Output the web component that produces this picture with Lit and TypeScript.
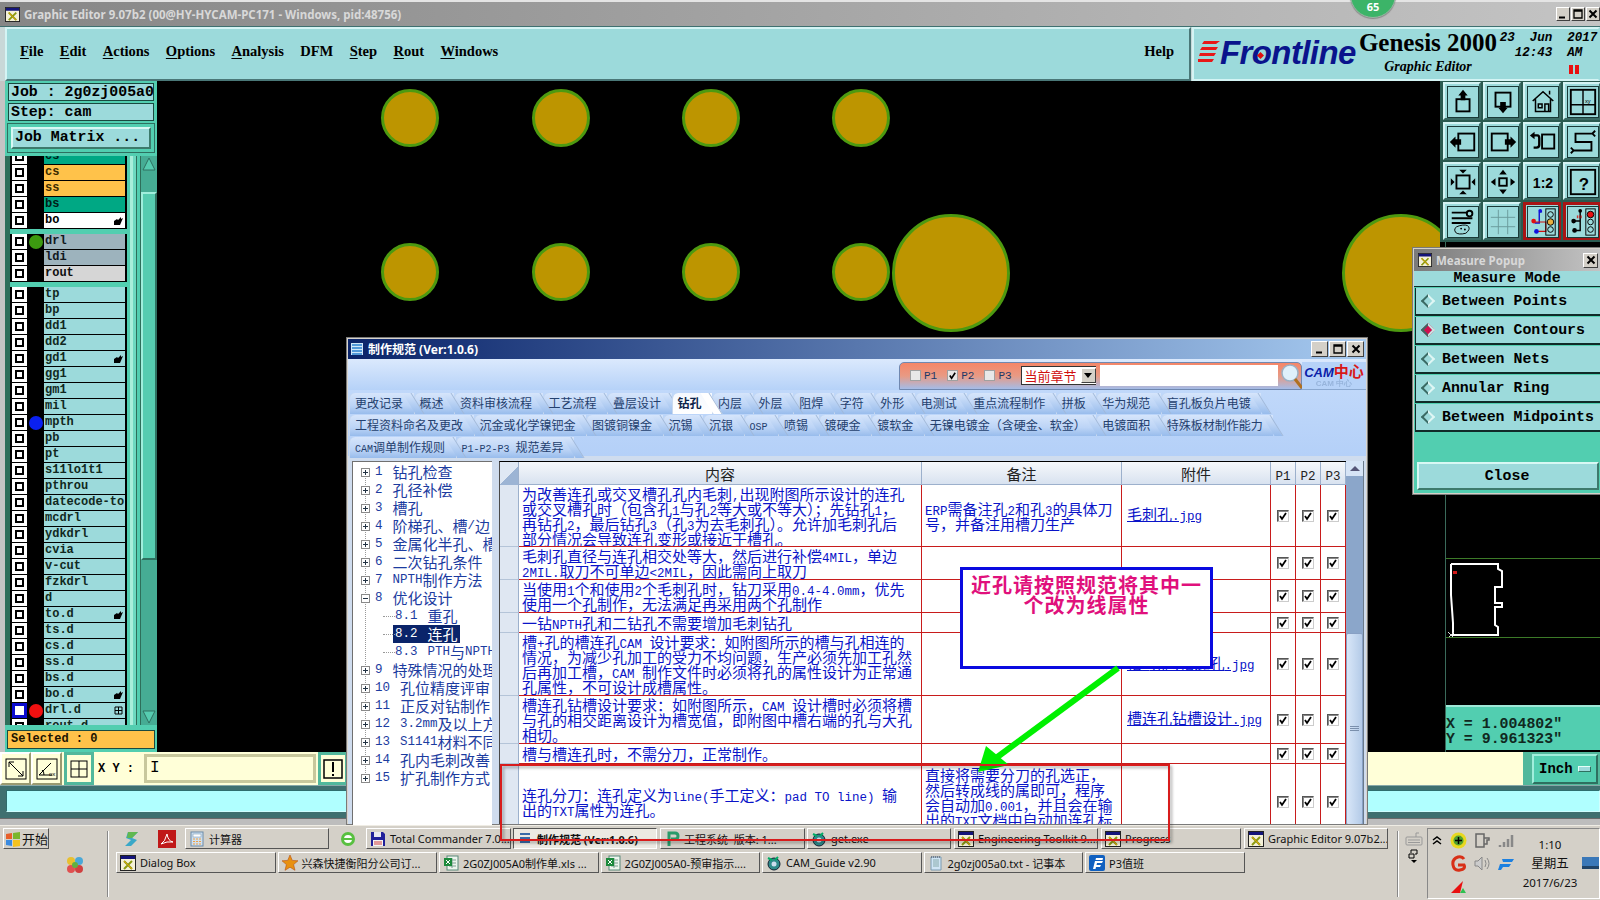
import { LitElement, html, css, svg } from "lit";
import { customElement } from "lit/decorators.js";

// half-width runs of the SimSun-like text
const mix = (text: string) =>
  text.split(/([\x21-\x7e ]+)/).map((part, i) => (i % 2 ? html`<span class="lat">${part}</span>` : part));

const appIcon = html`<svg class="ico" viewBox="0 0 16 16"><rect x=".5" y=".5" width="15" height="15" fill="#f4f0d8" stroke="#222"/><rect x="1" y="1" width="14" height="3" fill="#14147a"/><path d="M4 6l8 8M12 6l-8 8" stroke="#8a9a10" stroke-width="2"/><path d="M4 6l8 8" stroke="#e0a000" stroke-width="1"/></svg>`;
const xlsIcon = html`<svg class="ico" viewBox="0 0 16 16"><rect x="4" y="1" width="11" height="14" fill="#eef5ee" stroke="#5a8a7a"/><path d="M6 5h7M6 8h7M6 11h7M9 3v10" stroke="#7aa090"/><rect x="1" y="3" width="8" height="8" fill="#1c8a3c"/><path d="M3 5l4 4M7 5l-4 4" stroke="#fff"/></svg>`;
const noteIcon = html`<svg class="ico" viewBox="0 0 16 16"><path d="M3 2h10v13H3z" fill="#cfe4f4" stroke="#7a9ab0"/><path d="M5 5h6M5 7h6M5 9h6M5 11h6" stroke="#8aa"/><path d="M3 2h10" stroke="#445" stroke-dasharray="1 1"/></svg>`;
const gearIcon = html`<svg class="ico" viewBox="0 0 16 16"><circle cx="8" cy="9" r="6" fill="#2e8a8a" stroke="#123"/><circle cx="8" cy="9" r="2.5" fill="#cde"/><path d="M2 3l4 2M12 2l-3 3" stroke="#0a6" stroke-width="2"/></svg>`;
const calcIcon = html`<svg class="ico" viewBox="0 0 16 16"><rect x="2" y="1" width="12" height="14" fill="#cfe0f0" stroke="#6a8aa8"/><rect x="4" y="3" width="8" height="3" fill="#fff" stroke="#6a8aa8" stroke-width=".5"/><path d="M4 8h2M7 8h2M10 8h2M4 10.5h2M7 10.5h2M10 10.5h2M4 13h2M7 13h2M10 13h2" stroke="#f0a040"/></svg>`;
const diskIcon = html`<svg class="ico" viewBox="0 0 16 16"><path d="M1 1h12l2 2v12H1z" fill="#20209a"/><rect x="4" y="1" width="7" height="5" fill="#e8e8f0"/><rect x="3" y="9" width="10" height="6" fill="#f4f4f4"/><path d="M4 11h8M4 13h8" stroke="#d04040"/></svg>`;
const docIcon = html`<svg class="ico" viewBox="0 0 16 16"><path d="M3 3h10M3 7h10M3 11h10" stroke="#3a6aa8" stroke-width="2"/></svg>`;
const pIcon = html`<svg class="ico" viewBox="0 0 16 16"><path d="M5 15V2h6q3 0 3 3t-3 3H7" fill="none" stroke="#2a9a6a" stroke-width="3"/></svg>`;
const starIcon = html`<svg class="ico" viewBox="0 0 16 16"><path d="M8 0l2.3 5.4 5.7.4-4.4 3.8 1.4 5.7L8 12.2l-5 3.1 1.4-5.7L0 5.8l5.700-.4z" fill="#e89010" stroke="#b85010" stroke-width=".6"/></svg>`;
const fIcon = html`<svg class="ico" viewBox="0 0 16 16"><rect width="16" height="16" rx="2" fill="#1060c0"/><path d="M4 14l2-8h8l-1 2H8l-.5 2H12l-1 2H7l-.5 2zM7 3h7l-.5 2H6.5z" fill="#fff"/></svg>`;

const minGlyph = html`<svg viewBox="0 0 10 10"><path d="M1 8.5h6" stroke="#000" stroke-width="2"/></svg>`;
const maxGlyph = html`<svg viewBox="0 0 10 10"><path d="M1 1h8v8H1zM1 2h8" fill="none" stroke="#000" stroke-width="1.3"/></svg>`;
const closeGlyph = html`<svg viewBox="0 0 10 10"><path d="M1.5 1.5l7 7M8.5 1.5l-7 7" stroke="#000" stroke-width="2"/></svg>`;

const toolIcons = [
  svg`<rect x="9" y="13" width="14" height="13" fill="none" stroke="#000" stroke-width="2"/><path d="M16 3l5 6h-2.5v5h-5V9H11z"/>`,
  svg`<rect x="8" y="6" width="16" height="15" fill="none" stroke="#000" stroke-width="2"/><path d="M16 28l5-6h-2v-6h-6v6h-2z"/>`,
  svg`<path d="M5 15L16 5l11 10M8 13v13h16V13M11 18h4v4h-4zM18 18h4v8h-4zM23 8v-4" fill="none" stroke="#000" stroke-width="1.6"/>`,
  svg`<rect x="3" y="3" width="26" height="26" fill="none" stroke="#000" stroke-width="2"/><path d="M3 19h26M16 3v26" stroke="#000" stroke-width="1.5"/><text x="18" y="17" font-size="6" font-family="Liberation Sans">xy</text>`,
  svg`<rect x="11" y="7" width="17" height="18" fill="none" stroke="#000" stroke-width="2"/><path d="M2 16l6-6v3h6v6H8v3z"/>`,
  svg`<rect x="4" y="7" width="17" height="18" fill="none" stroke="#000" stroke-width="2"/><path d="M30 16l-6-6v3h-6v6h6v3z"/>`,
  svg`<rect x="15" y="8" width="13" height="15" fill="none" stroke="#000" stroke-width="2"/><path d="M5 9h5q2 0 2 3v7q0 3-3 3H6" fill="none" stroke="#000" stroke-width="2.5"/><path d="M2 9l5-4v8z"/>`,
  svg`<path d="M27 7H8v9h17v9H6M29 4l-3 3 3 3M3 22l3 3-3 3" fill="none" stroke="#000" stroke-width="2"/>`,
  svg`<rect x="9" y="9" width="14" height="14" fill="none" stroke="#000" stroke-width="2"/><path d="M16 7l-4-4h8zM16 25l-4 4h8zM7 16l-4-4v8zM25 16l4-4v8z"/>`,
  svg`<rect x="12" y="12" width="8" height="8" fill="none" stroke="#000" stroke-width="2"/><path d="M16 3l-4 5h8zM16 29l-4-5h8zM3 16l5-4v8zM29 16l-5-4v8z"/>`,
  svg`<text x="16" y="22" text-anchor="middle" font-size="15" font-weight="700" font-family="Liberation Sans">1:2</text>`,
  svg`<rect x="3" y="3" width="26" height="26" fill="none" stroke="#000" stroke-width="2"/><text x="17" y="24" text-anchor="middle" font-size="18" font-weight="700" font-family="Liberation Sans">?</text>`,
  svg`<path d="M4 6h17M4 12h22M4 17h20" stroke="#000" stroke-width="2"/><circle cx="23" cy="7" r="3" fill="none" stroke="#000" stroke-width="2"/><path d="M8 27q-3-5 4-7 8-2 10 1t-3 7q-8 2-11-1z" fill="none" stroke="#000"/><circle cx="14" cy="23" r="1"/><circle cx="18" cy="24" r="1"/>`,
  svg`<path d="M3 11h26M3 21h26M11 3v26M21 3v26" stroke="#6a9a9a" stroke-width="1"/>`,
  svg`<path d="M12 5v12H7M12 5h3" fill="none" stroke="#1010d0" stroke-width="1.5"/><path d="M7 16h12v10H9" fill="none" stroke="#d01010" stroke-width="1.2"/><circle cx="13" cy="4" r="2" fill="#1010e0"/><circle cx="6" cy="15" r="2.5" fill="#e01010"/><circle cx="9" cy="26" r="2.5" fill="#1010e0"/><rect x="19" y="2" width="10" height="28" fill="none" stroke="#000"/><circle cx="24" cy="8" r="3" fill="none" stroke="#000"/><circle cx="24" cy="16" r="3.5" fill="#e8b040" stroke="#000"/><circle cx="24" cy="24" r="3" fill="none" stroke="#000"/>`,
  svg`<path d="M13 5v20H7M7 15h6" fill="none" stroke="#000" stroke-width="1.5"/><path d="M10 12v-3M12 12v-3M14 12v-3" stroke="#d01010"/><circle cx="13" cy="4" r="2"/><circle cx="6" cy="15" r="2.5"/><circle cx="7" cy="25" r="2.5"/><rect x="19" y="2" width="10" height="28" fill="none" stroke="#000"/><circle cx="24" cy="8" r="3.5" fill="#e81010" stroke="#000"/><circle cx="24" cy="16" r="3" fill="none" stroke="#000"/><circle cx="24" cy="24" r="3" fill="none" stroke="#000"/>`,
];

type Layer = { n: string; c?: string; dot?: string; mark?: string; sel?: boolean };
const layerGroups: Layer[][] = [
  [
    { n: "cs", c: "green" },
    { n: "cs", c: "orange" },
    { n: "ss", c: "orange" },
    { n: "bs", c: "green" },
    { n: "bo", c: "white", mark: "hand" },
  ],
  [
    { n: "drl", c: "gray", dot: "#3c9a10" },
    { n: "ldi", c: "gray" },
    { n: "rout", c: "silver" },
  ],
  [
    { n: "tp" },
    { n: "bp" },
    { n: "dd1" },
    { n: "dd2" },
    { n: "gd1", mark: "hand" },
    { n: "gg1" },
    { n: "gm1" },
    { n: "mil" },
    { n: "mpth", dot: "#0a20f0" },
    { n: "pb" },
    { n: "pt" },
    { n: "s11lo1t1" },
    { n: "pthrou" },
    { n: "datecode-to" },
    { n: "mcdrl" },
    { n: "ydkdrl" },
    { n: "cvia" },
    { n: "v-cut" },
    { n: "fzkdrl" },
    { n: "d" },
    { n: "to.d", mark: "hand" },
    { n: "ts.d" },
    { n: "cs.d" },
    { n: "ss.d" },
    { n: "bs.d" },
    { n: "bo.d", mark: "hand" },
    { n: "drl.d", dot: "#f01010", mark: "grid", sel: true },
    { n: "rout.d" },
  ],
];

const pads = [
  [410, 118, 29],
  [561, 118, 29],
  [711, 118, 29],
  [861, 118, 29],
  [410, 272, 29],
  [561, 272, 29],
  [711, 272, 29],
  [861, 272, 29],
  [951, 273, 59],
  [1401, 273, 59],
];

const tabRows = [
  ["更改记录", "概述", "资料审核流程", "工艺流程", "叠层设计", "钻孔", "内层", "外层", "阻焊", "字符", "外形", "电测试", "重点流程制作", "拼板", "华为规范", "盲孔板负片电镀"],
  ["工程资料命名及更改", "沉金或化学镍钯金", "图镀铜镍金", "沉锡", "沉银", "OSP", "喷锡", "镀硬金", "镀软金", "无镍电镀金（含硬金、软金）", "电镀面积", "特殊板材制作能力"],
  ["CAM调单制作规则", "P1-P2-P3 规范差异"],
];

const tree = [
  { num: "1", text: "钻孔检查" },
  { num: "2", text: "孔径补偿" },
  { num: "3", text: "槽孔" },
  { num: "4", text: "阶梯孔、槽/边" },
  { num: "5", text: "金属化半孔、槽" },
  { num: "6", text: "二次钻孔条件" },
  { num: "7", text: "NPTH制作方法" },
  { num: "8", text: "优化设计", open: true },
  { num: "8.1", text: "重孔", sub: true },
  { num: "8.2", text: "连孔", sub: true, sel: true },
  { num: "8.3", text: "PTH与NPTH", sub: true },
  { num: "9", text: "特殊情况的处理" },
  { num: "10", text: "孔位精度评审" },
  { num: "11", text: "正反对钻制作" },
  { num: "12", text: "3.2mm及以上方" },
  { num: "13", text: "S1141材料不同" },
  { num: "14", text: "孔内毛刺改善" },
  { num: "15", text: "扩孔制作方式" },
];

const specRows = [
  {
    h: 62,
    body: ["为改善连孔或交叉槽孔孔内毛刺,出现附图所示设计的连孔", "或交叉槽孔时（包含孔1与孔2等大或不等大）；先钻孔1，", "再钻孔2，最后钻孔3（孔3为去毛刺孔）。允许加毛刺孔后", "部分情况会导致连孔变形或接近于槽孔。"],
    note: ["ERP需备注孔2和孔3的具体刀", "号，并备注用槽刀生产"],
    file: "毛刺孔.jpg",
  },
  { h: 33, body: ["毛刺孔直径与连孔相交处等大，然后进行补偿4MIL，单边", "2MIL.取刀不可单边<2MIL，因此需向上取刀"] },
  { h: 33, body: ["当使用1个和使用2个毛刺孔时，钻刀采用0.4-4.0mm，优先", "使用一个孔制作，无法满足再采用两个孔制作"] },
  { h: 20, body: ["一钻NPTH孔和二钻孔不需要增加毛刺钻孔"] },
  {
    h: 63,
    body: ["槽+孔的槽连孔CAM 设计要求：如附图所示的槽与孔相连的", "情况，为减少孔加工的受力不均问题，生产必须先加工孔然", "后再加工槽，CAM 制作文件时必须将孔的属性设计为正常通", "孔属性，不可设计成槽属性。"],
    file: "槽+孔的槽连孔.jpg",
  },
  {
    h: 48,
    body: ["槽连孔钻槽设计要求：如附图所示，CAM 设计槽时必须将槽", "与孔的相交距离设计为槽宽值，即附图中槽右端的孔与大孔", "相切。"],
    file: "槽连孔钻槽设计.jpg",
  },
  { h: 20, body: ["槽与槽连孔时，不需分刀，正常制作。"] },
  {
    h: 76,
    body: ["连孔分刀：连孔定义为line(手工定义：pad TO line) 输", "出的TXT属性为连孔。"],
    note: ["直接将需要分刀的孔选正，", "然后转成线的属即可，程序", "会自动加0.001，并且会在输", "出的TXT文档中自动加连孔标"],
    clip: true,
  },
];

const measureModes = ["Between Points", "Between Contours", "Between Nets", "Annular Ring", "Between Midpoints"];

const taskRow1 = [
  { t: "计算器", i: calcIcon, w: 144, m: 9 },
  { t: "Total Commander 7.0...", i: diskIcon, w: 145, m: 9 },
  { t: "制作规范 (Ver:1.0.6)", i: docIcon, w: 144, on: true, m: 2 },
  { t: "工程系统  版本: 1...", i: pIcon, w: 145, m: 3 },
  { t: "get.exe", i: gearIcon, w: 144, m: 2 },
  { t: "Engineering Toolkit 9....", i: appIcon, w: 144, m: 3 },
  { t: "Progress", i: appIcon, w: 140, m: 3 },
  { t: "Graphic Editor 9.07b2...", i: appIcon, w: 144, m: 3 },
];
const taskRow2 = [
  { t: "Dialog Box", i: appIcon, m: 0 },
  { t: "兴森快捷衡阳分公司订...", i: starIcon, m: 2 },
  { t: "2G0ZJ005A0制作单.xls ...", i: xlsIcon, m: 2 },
  { t: "2G0ZJ005A0-预审指示....", i: xlsIcon, m: 2 },
  { t: "CAM_Guide v2.90", i: gearIcon, m: 2 },
  { t: "2g0zj005a0.txt - 记事本", i: noteIcon, m: 2 },
  { t: "P3值班", i: fIcon, m: 2 },
];

@customElement("app-root")
export class AppRoot extends LitElement {
  static styles = css`
    :host {
      display: block;
      position: relative;
      width: 1600px;
      height: 900px;
      overflow: hidden;
      background: #d4d0c8;
      font-family: "Noto Sans", "Noto Sans CJK SC", sans-serif;
    }
    .ico { width: 16px; height: 16px; flex: none; }
    .lat { font-family: "Liberation Mono", monospace; font-size: 0.834em; }

    /* main window */
    .main { height: 825px; display: flex; flex-direction: column; background: #c4c4c4; border-top: 2px solid #e4e4e4; box-sizing: border-box; }
    .title {
      height: 24px; flex: none; display: flex; align-items: center; gap: 4px; padding-left: 5px;
      background: linear-gradient(90deg, #868686, #c4c4c4);
      color: #d8d8d8; font: 700 11.5px "Noto Sans", sans-serif;
    }
    .title .ico { width: 15px; height: 15px; }
    .winbtns { margin-left: auto; display: flex; gap: 1px; }
    .winbtn {
      width: 14px; height: 14px; background: #d4d0c8; border: 1px solid; border-color: #fff #404040 #404040 #fff;
      box-sizing: border-box; display: flex; align-items: center; justify-content: center; flex: none;
    }
    .winbtn svg { width: 10px; height: 10px; }
    .menurow { height: 54px; flex: none; display: flex; background: #c8d8d8; border-top: 1px solid #3f7070; }
    .menu {
      width: 1186px; flex: none; margin-left: 5px; margin-right: 1px; display: flex; align-items: center; gap: 16.4px; padding: 0 15px 5px 13px; box-sizing: border-box;
      background: #9cdadb; border: 2px solid; border-color: #d4f4f4 #4a7878 #4a7878 #d4f4f4;
      font: 700 14.5px "Liberation Serif", serif; color: #000;
    }
    .menu u { text-underline-offset: 2px; }
    .menu .help { margin-left: auto; }
    .brand {
      flex: 1; min-width: 0; display: flex; background: #9cdadb; border: 2px solid; border-color: #d4f4f4 #9cdadb #d4f4f4 #d4f4f4;
      padding-left: 4px; align-items: flex-start; box-sizing: border-box;
    }
    .stripes { width: 22px; height: 22px; margin-top: 11px; flex: none; }
    .frontline {
      font: italic 700 33px/1 "Liberation Sans", sans-serif; color: #0a148c; letter-spacing: -0.6px;
      margin-top: 7px; width: 137px; flex: none; position: relative; white-space: nowrap;
    }
    .frontline i { position: absolute; left: 38px; top: 17px; width: 5px; height: 5px; background: #e01010; transform: rotate(45deg); }
    .genesis { width: 142px; flex: none; text-align: center; font: 700 25px/26px "Liberation Serif", serif; color: #000; padding-top: 1px; white-space: nowrap; }
    .genesis small { display: block; font: italic 700 14px/20px "Liberation Serif", serif; margin-top: 1px; }
    .stamp { flex: 1; min-width: 0; text-align: center; font: italic 700 12.5px/15px "Liberation Mono", monospace; white-space: pre; padding-top: 2px; }
    .pause { display: flex; gap: 2px; justify-content: center; margin: 4px 0 0 50px; }
    .pause b { width: 4px; height: 9px; background: #e81010; }

    .body { flex: 1; display: flex; min-height: 0; }

    /* left column */
    .left { width: 152px; margin-left: 5px; flex: none; display: flex; flex-direction: column; background: #52ceb0; }
    .info { height: 18px; margin: 2px 3px 0; background: #9cdadb; border: 1px solid #1a4a40; box-sizing: border-box; font: 700 14.9px/16px "Liberation Mono", monospace; padding-left: 2px; white-space: pre; flex: none; }
    .matrixwrap { margin: 2px 2px 3px; padding: 3px; background: #52ceb0; border: 1px solid #2e7060; flex: none; }
    .matrix { height: 22px; background: #9cdadb; border: 2px solid; border-color: #d8f8f4 #3d7a6c #3d7a6c #d8f8f4; font: 700 14.9px/17px "Liberation Mono", monospace; padding-left: 2px; white-space: pre; box-sizing: border-box; }
    .listrow { flex: 1; display: flex; min-height: 0; border-left: 5px solid #2e6e5a; }
    .list { width: 117px; flex: none; overflow: hidden; background: #52ceb0; }
    .listin { margin-top: -7px; display: flex; flex-direction: column; gap: 5px; }
    .group { background: #000; padding: 0 2px; }
    .layer { height: 16px; display: flex; align-items: flex-start; }
    .cb { width: 15px; height: 15px; background: #fff; flex: none; display: flex; align-items: center; justify-content: center; }
    .cb::after { content: ""; width: 5px; height: 5px; border: 2px solid #000; background: #fff; }
    .cb.sel { background: #0a0ad0; }
    .cb.sel::after { width: 7px; height: 7px; border: 1px solid #fff; background: #fff; }
    .dotcol { width: 17px; flex: none; display: flex; justify-content: center; align-items: center; height: 15px; }
    .dotcol b { width: 14px; height: 14px; border-radius: 50%; }
    .name { flex: 1; height: 15px; background: #9cdadb; font: 700 12px/15px "Liberation Mono", monospace; padding-left: 1px; color: #102820; display: flex; justify-content: space-between; align-items: center; overflow: hidden; white-space: nowrap; }
    .name.orange { background: #ffc24a; color: #3a2a00; }
    .name.green { background: #00a884; color: #002018; }
    .name.white { background: #fff; color: #000; }
    .name.gray { background: #9db3bd; color: #101820; }
    .name.silver { background: #d6d6d6; color: #101010; }
    .name svg { width: 9px; height: 9px; margin-right: 2px; flex: none; }
    .gutter { width: 13px; flex: none; background: linear-gradient(90deg, #52ceb0 0 3px, #a8eeda 3px 6px, #6ed8c0 6px 9px, #2e6e5a 9px 10px, #52ceb0 10px); }
    .scroll { width: 17px; flex: none; background: #46ac94; border-left: 1px solid #2e6e5a; box-sizing: border-box; display: flex; flex-direction: column; }
    .scroll svg { width: 16px; height: 16px; flex: none; }
    .scroll svg:last-child { margin-top: auto; }
    .scroll .thumb { flex: none; height: 368px; margin-top: 20px; background: #56ccb0; border: 2px solid; border-color: #a0eedc #2e7060 #2e7060 #a0eedc; box-sizing: border-box; }
    .selected { height: 19px; margin: 5px 2px 3px 2px; flex: none; background: #ffc24a; border: 1px solid #1a4a40; box-sizing: border-box; font: 700 12px/17px "Liberation Mono", monospace; padding-left: 3px; color: #201400; white-space: pre; }

    /* drawing area */
    .canvas { flex: 1; position: relative; background: #000; overflow: hidden; }
    .pad { position: absolute; border-radius: 50%; background: #bd9500; border: 3px solid #4d9a10; box-sizing: border-box; }

    /* right column */
    .right { width: 160px; flex: none; display: flex; flex-direction: column; background: #000; }
    .tools { display: grid; grid-template-columns: repeat(4, 38px); gap: 2px; padding: 1px 0 2px 3px; background: #2a5a50; flex: none; }
    .tool { width: 38px; height: 38px; box-sizing: border-box; background: #9cdadb; border: 2px solid; border-color: #d4f4f4 #3a6a64 #3a6a64 #d4f4f4; padding: 2px; }
    .tool svg { display: block; width: 30px; height: 30px; border: 1px solid #1a3a38; }
    .tool.alert { border-color: #a81414; border-width: 3px; padding: 1px; }
    .rightin { flex: 1; margin-left: 5px; border-left: 1px solid #3a6a5a; display: flex; flex-direction: column; justify-content: flex-end; }
    .mini { height: 80px; border-top: 1px solid #3c7a28; border-bottom: 1px solid #3c7a28; margin-bottom: 67px; flex: none; box-sizing: border-box; }
    .mini svg { display: block; width: 154px; height: 78px; }
    .coords { height: 45px; background: #52ceb0; border-top: 2px solid #a0e8d8; box-sizing: border-box; font: 700 14.9px/15px "Liberation Mono", monospace; padding: 10px 0 0 0; color: #102820; white-space: pre; flex: none; margin-bottom: 2px; }

    /* xy line */
    .xy { height: 33px; flex: none; display: flex; background: #ffffd8; }
    .xybtn { width: 31px; flex: none; box-sizing: border-box; background: #ffffd8; border: 2px solid; border-color: #fff #9a9a70 #9a9a70 #fff; display: flex; align-items: center; justify-content: center; }
    .xybtn.teal { width: 30px; margin: 0 2px; background: #ffffd8; border: 3px solid #52b89c; }
    .xybtn svg { width: 22px; height: 22px; }
    .xylabel { width: 48px; flex: none; font: 700 12px/35px "Liberation Mono", monospace; white-space: pre; padding-left: 2px; box-sizing: border-box; }
    .xyinput { width: 172px; flex: none; margin: 2px 0; border: 3px solid #c8c89c; box-sizing: border-box; padding-left: 3px; font: 400 16px/22px "Liberation Mono", monospace; }
    .xyrest { flex: 1; }
    .inchwrap { width: 77px; flex: none; background: #52b89c; padding: 2px 2px 1px 9px; box-sizing: border-box; }
    .inch { height: 100%; background: #52ceb0; border: 2px solid; border-color: #a0eedc #2e7060 #2e7060 #a0eedc; box-sizing: border-box; font: 700 14px/25px "Liberation Mono", monospace; padding: 0 5px; display: flex; justify-content: space-between; align-items: center; }
    .inch i { width: 11px; height: 4px; background: #9cdadb; border: 1px solid; border-color: #e4fff8 #2e7060 #2e7060 #e4fff8; }
    .status { height: 33px; flex: none; padding: 4px 0 6px 6px; background: #3f7070; box-sizing: border-box; border-top: 1px solid #88a8a8; }
    .status div { height: 100%; background: #b0ffff; border: 1px solid; border-color: #2e6e6e #d0ffff #d0ffff #2e6e6e; box-sizing: border-box; }
    .mainfoot { height: 7px; flex: none; background: #bdbdbd; border-top: 1px solid #6a6a6a; box-sizing: border-box; }

    /* green badge top right */
    .badge {
      position: absolute; left: 1350px; top: -28px; width: 46px; height: 46px; border-radius: 50%;
      background: #3cb468; border: 1px solid #9ab8a4; box-shadow: 0 1px 1px #888; box-sizing: border-box;
      display: flex; align-items: flex-end; justify-content: center; color: #fff; font: 700 11px/17px "Noto Sans", sans-serif; padding-bottom: 2px;
    }

    /* spec dialog */
    .dlg {
      position: absolute; left: 346px; top: 337px; width: 1022px; height: 488px; box-sizing: border-box;
      background: #c4d8f4; border: 2px solid #d8d4cc; border-bottom: 0; outline: 1px solid #7a7a7a; outline-offset: -1px;
      display: flex; flex-direction: column; overflow: hidden;
    }
    .dlgtitle {
      height: 20px; flex: none; display: flex; align-items: center; gap: 4px; padding-left: 2px;
      background: linear-gradient(90deg, #0a246a, #a6caf0); color: #fff; font: 700 12px "Noto Sans", "Noto Sans CJK SC", sans-serif;
    }
    .dlgtitle > svg { width: 14px; height: 14px; }
    .dlgtitle .winbtns { padding-right: 2px; }
    .dlgtitle .winbtn { width: 17px; height: 16px; }
    .dlgbar { height: 31px; flex: none; background: linear-gradient(#dbe9fd, #b6d2f8); display: flex; justify-content: flex-end; align-items: center; padding-top: 2px; box-sizing: border-box; }
    .filter {
      width: 403px; height: 28px; border: 1px solid #7088b0; border-radius: 5px 5px 0 0; box-sizing: border-box;
      background: linear-gradient(#f58668, #e89a84 50%, #a4bce8); display: flex; align-items: center; padding-left: 10px; color: #1c3868;
      font: 400 11px "Liberation Mono", monospace;
    }
    .chk { width: 11px; height: 11px; box-sizing: border-box; background: #e8e8e8; border: 1px solid #a0a0a0; margin-right: 3px; display: flex; align-items: center; justify-content: center; flex: none; }
    .chk svg { width: 9px; height: 9px; }
    .filter span.lb { margin-right: 10px; }
    .combo { width: 75px; height: 19px; background: #fff; display: flex; align-items: center; justify-content: space-between; color: #d01010; font: 13px "Noto Sans CJK SC", sans-serif; box-sizing: border-box; border: 1px solid #333; border-right: 0; padding-left: 3px; white-space: nowrap; flex: none; margin-left: -1px; }
    .combo i { width: 15px; height: 15px; background: #d4d0c8; border: 1px solid; border-color: #fff #404040 #404040 #fff; box-sizing: border-box; display: flex; align-items: center; justify-content: center; flex: none; }
    .combo i::after { content: ""; border: 4px solid transparent; border-top: 5px solid #000; border-bottom: 0; }
    .search { width: 178px; height: 21px; background: #fff; margin-left: 4px; flex: none; }
    .glass { width: 24px; height: 28px; margin-left: 2px; flex: none; }
    .camlogo { width: 64px; height: 28px; overflow: hidden; flex: none; text-align: center; background: #b6d2f8; border-bottom: 1px solid #8aa8d0; box-sizing: border-box; font: 700 15px/17px "Noto Sans CJK SC", sans-serif; color: #d81818; white-space: nowrap; }
    .camlogo em { color: #0a20a8; font: italic 700 13px "Liberation Sans", sans-serif; }
    .camlogo small { display: block; color: #8aa8d0; font: 700 8px/8px "Liberation Sans", sans-serif; opacity: 0.7; }
    .tabs { height: 66px; flex: none; padding-top: 3px; box-sizing: border-box; background: linear-gradient(#c0d8fa, #b4d0f8); }
    .tabrow { height: 21px; display: flex; padding-left: 1px; margin-bottom: 1px; }
    .tab {
      position: relative; height: 21px; padding: 0 10.5px 0 5px; flex: none; box-sizing: border-box; border-top-left-radius: 6px;
      font: 12px/20px "Noto Sans CJK SC", sans-serif; color: #24406e; white-space: pre;
      background: linear-gradient(#d6e5fb, #bcd4f6 60%, #98bcec);
      border-left: 1px solid #c8d8ee;
    }
    .tab::after {
      content: ""; position: absolute; right: -4px; top: 0; bottom: 0; width: 8px; background: linear-gradient(#d6e5fb, #98bcec);
      border-right: 1px solid #a0b8d8; transform: skewX(32deg); z-index: 1;
    }
    .tab span.t { position: relative; z-index: 2; }
    .tab.on { background: linear-gradient(#f4f8fe, #fff); font-weight: 700; color: #0c2348; z-index: 3; }
    .tab.on::after { background: #fff; }
    .content { flex: 1; min-height: 0; display: flex; padding: 5px 2px 0 4px; gap: 7px; background: #cfdcee; }
    .tree { width: 140px; flex: none; position: relative; background: #fff; border-left: 1px solid #707070; border-top: 1px solid #707070; box-sizing: border-box; overflow: hidden; padding-top: 1px; color: #1c3ca0; font: 15px/18px "Noto Sans CJK SC", sans-serif; }
    .tree::before { content: ""; position: absolute; left: 12px; top: 10px; height: 311px; border-left: 1px dotted #999; }
    .node { height: 18px; position: relative; display: flex; align-items: center; padding-left: 8px; white-space: nowrap; }
    .node.sub { padding-left: 26px; }
    .node.sub::before { content: ""; position: absolute; left: 30px; width: 12px; border-top: 1px dotted #999; }
    .node .box { position: relative; width: 9px; height: 9px; background: #fff; border: 1px solid #8a8a8a; box-sizing: border-box; margin-right: 3px; flex: none; }
    .box::before { content: ""; position: absolute; left: 1px; right: 1px; top: 3px; height: 1px; background: #234; }
    .box.plus::after { content: ""; position: absolute; top: 1px; bottom: 1px; left: 3px; width: 1px; background: #234; }
    .node .num { margin-right: 10px; }
    .nodeText { display: inline-flex; padding: 0 2px; height: 18px; align-items: center; }
    .node.sub .nodeText { margin-left: 14px; }
    .node.sel .nodeText { background: #0a246a; color: #fff; }

    .table { width: 847px; flex: none; background: #fff; border-top: 1px solid #000; border-left: 1px solid #4a4a4a; box-sizing: border-box; overflow: hidden; color: #0a14c8; font: 15px/15px "Noto Sans CJK SC", sans-serif; }
    .thead, .trow { display: grid; grid-template-columns: 19px 403px 200px 149px 25px 25px 25px; }
    .thead { height: 23px; background: linear-gradient(#f6f8fb, #d8e2f0); border-bottom: 1px solid #9cb0cc; color: #222; box-sizing: border-box; }
    .thead > div { text-align: center; line-height: 24px; border-right: 1px solid #9cb0cc; box-sizing: border-box; white-space: nowrap; }
    .corner { background: linear-gradient(135deg, #dfe8f4 50%, #9cb4d4 50%); }
    .trow { border-bottom: 1px solid #c81c1c; box-sizing: border-box; }
    .trow > div { border-right: 1px solid #c81c1c; box-sizing: border-box; min-width: 0; overflow: hidden; display: flex; align-items: center; }
    .trow > .rh { background: #dfe7f2; border-right: 1px solid #9cb0cc; border-bottom: 1px solid #b4c4d8; margin-bottom: -1px; }
    .trow > .lines { flex-direction: column; align-items: flex-start; justify-content: center; padding-left: 3px; white-space: pre; }
    .trow > .lines.top { justify-content: flex-start; padding-top: 3px; }
    .lines > div { height: 15px; line-height: 15px; flex: none; }
    .link { padding-left: 5px; text-decoration: underline; white-space: nowrap; }
    .ck { justify-content: center; }
    .ckbox { width: 12px; height: 12px; background: #fff; border: 1px solid; border-color: #555 #ccc #ccc #555; box-shadow: inset 1px 1px 0 #888; box-sizing: border-box; display: flex; align-items: center; justify-content: center; }
    .ckbox svg { width: 10px; height: 10px; }
    .vscroll { width: 17px; flex: none; background: #8ba6ca; display: flex; flex-direction: column; margin-left: -7px; border-right: 1px solid #6a7a8a; }
    .vscroll .up { height: 15px; background: #d6e4f6; display: flex; align-items: center; justify-content: center; }
    .vscroll .up::after { content: ""; border: 5px solid transparent; border-bottom: 5px solid #557; border-top: 0; }
    .vscroll .th { margin-top: 157px; flex: 1; background: linear-gradient(90deg, #d8e6f8, #b4cbe8); border: 1px solid #88a0c4; border-radius: 2px; display: flex; flex-direction: column; justify-content: center; }
    .grip { height: 6px; margin: 0 3px; background: repeating-linear-gradient(#7a8fac 0 1px, transparent 1px 2px); }

    /* measure popup */
    .popup { position: absolute; left: 1412px; top: 247px; width: 190px; height: 248px; box-sizing: border-box; background: #52ceb0; border: 2px solid #d4d0c8; border-right: 0; outline: 1px solid #7a7a7a; outline-offset: -1px; display: flex; flex-direction: column; }
    .poptitle { height: 22px; flex: none; display: flex; align-items: center; gap: 4px; padding-left: 4px; background: linear-gradient(90deg, #7a7a7a, #c4c4c4); color: #d8d8d8; font: 700 11.5px "Noto Sans", sans-serif; }
    .poptitle .ico { width: 14px; height: 14px; }
    .poptitle .winbtn { margin-left: auto; margin-right: 4px; width: 15px; height: 15px; }
    .pophead { height: 16px; flex: none; background: #9cdadb; border-bottom: 1px solid #102a28; box-sizing: border-box; text-align: center; font: 700 14.9px/15px "Liberation Mono", monospace; padding-right: 2px; white-space: pre; }
    .popitem { height: 28px; margin: 1px 0 0 1px; flex: none; background: #9cdadb; border-bottom: 2px solid #102a28; border-left: 1px solid #102a28; box-sizing: border-box; display: flex; align-items: center; gap: 9px; padding-left: 7px; font: 700 14.9px/1 "Liberation Mono", monospace; white-space: pre; }
    .dia { width: 6px; height: 6px; transform: rotate(45deg); background: #9cdadb; border: 2px solid; border-color: #dff6f4 #dff6f4 #3a6a64 #3a6a64; flex: none; }
    .dia.on { background: #d01050; border-color: #c8e6e4 #c8e6e4 #3a6a64 #3a6a64; }
    .popfill { flex: 1; }
    .popclose { height: 28px; margin: 0 3px 3px 3px; flex: none; background: #9cdadb; border: 2px solid; border-color: #d8f8f4 #3d7a6c #3d7a6c #d8f8f4; box-sizing: border-box; text-align: center; font: 700 14.9px/24px "Liberation Mono", monospace; padding-right: 2px; }

    /* taskbar */
    .taskbar { position: relative; height: 75px; display: flex; background: #d4d0c8; border-top: 1px solid #efece4; box-sizing: border-box; padding-top: 2px; font: 11px "Noto Sans", "Noto Sans CJK SC", sans-serif; color: #111; }
    .startcol { width: 107px; flex: none; }
    .logos { display: flex; justify-content: flex-end; padding: 6px 22px 0 0; }
    .logos svg { width: 20px; height: 20px; }
    .tdiv { width: 2px; height: 66px; margin-top: 3px; flex: none; background: linear-gradient(90deg, #888 1px, #fff 1px); }
    .tmain { width: 1288px; flex: none; display: flex; flex-direction: column; gap: 3px; }
    .trow1, .trow2 { display: flex; height: 21px; align-items: stretch; }
    .trow2 { padding-left: 7px; }
    .tb {
      box-sizing: border-box; display: flex; align-items: center; gap: 4px; padding-left: 3px; flex: none; overflow: hidden; white-space: pre;
      background: #d4d0c8; border: 1px solid; border-color: #fff #555 #555 #fff;
    }
    .tb.on { background: #ece9e2; border-color: #555 #fff #fff #555; font-weight: 700; }
    .tb.start { margin-left: 3px; width: 46px; height: 21px; font-size: 13px; gap: 1px; padding-left: 1px; }
    .trow2 .tb { width: 159.5px; }
    .quick { display: flex; align-items: center; padding-left: 14px; gap: 17px; }
    .quick svg { width: 18px; height: 18px; }
    .ie { width: 18px; height: 18px; margin-left: 10px; flex: none; align-self: center; }
    .tray-wrap { flex: 1; display: flex; }
    .sysbar { width: 28px; flex: none; display: flex; flex-direction: column; align-items: center; gap: 3px; padding: 4px 0 0 2px; box-sizing: border-box; }
    .sysbar svg { width: 18px; height: 14px; }
    .tray {
      flex: 1; height: 71px; margin-top: 0; box-sizing: border-box; border: 1px solid; border-color: #888 #fff #fff #888;
      display: grid; grid-template-columns: 19px 23px 24px 24px 64px 17px; grid-template-rows: 23px 23px 23px; align-items: center; justify-items: center;
    }
    .tray svg { width: 17px; height: 17px; }
    .clock { grid-column: 5; grid-row: 1 / 4; text-align: center; white-space: nowrap; font-size: 11.5px; line-height: 19px; }
    .day { font-size: 12.5px; }

    /* markups on the screenshot */
    .box-note {
      position: absolute; left: 960px; top: 567px; width: 253px; height: 102px; box-sizing: border-box; background: #fff; border: 3px solid #0a0ae0;
      text-align: center; color: #e0107c; font: 700 20px/20px "Noto Sans CJK SC", sans-serif; letter-spacing: 1px; padding: 5px 0 0;
    }
    .marks { position: absolute; left: 0; top: 0; width: 1600px; height: 900px; pointer-events: none; }
  `;

  private hand = html`<svg viewBox="0 0 9 9"><path d="M0 9V5l3-2 1 1 3-3v2l2-1-3 7z"/></svg>`;
  private gridMark = html`<svg viewBox="0 0 9 9"><path d="M1 1h7v7H1zM4.5 1v7M1 4.5h7" fill="none" stroke="#000"/></svg>`;
  private tick = html`<svg viewBox="0 0 10 10"><path d="M2 5l2 3 4-6" fill="none" stroke="#000" stroke-width="1.8"/></svg>`;

  private renderLayer(l: Layer) {
    return html`<div class="layer">
      <span class="cb ${l.sel ? "sel" : ""}"></span>
      <span class="dotcol">${l.dot ? html`<b style="background:${l.dot}"></b>` : ""}</span>
      <span class="name ${l.c ?? ""}">${l.n}${l.mark === "hand" ? this.hand : l.mark === "grid" ? this.gridMark : ""}</span>
    </div>`;
  }

  private renderLeft() {
    return html`<div class="left">
      <div class="info">Job : 2g0zj005a0</div>
      <div class="info">Step: cam</div>
      <div class="matrixwrap"><div class="matrix">Job Matrix ...</div></div>
      <div class="listrow">
        <div class="list">
          <div class="listin">
            ${layerGroups.map((g) => html`<div class="group">${g.map((l) => this.renderLayer(l))}</div>`)}
          </div>
        </div>
        <div class="gutter"></div>
        <div class="scroll">
          <svg viewBox="0 0 16 16"><path d="M8 2l6 12H2z" fill="#56ccb0" stroke="#2e7060"/></svg>
          <div class="thumb"></div>
          <svg viewBox="0 0 16 16"><path d="M8 14L2 2h12z" fill="#56ccb0" stroke="#2e7060"/></svg>
        </div>
      </div>
      <div class="selected">Selected : 0</div>
    </div>`;
  }

  private renderRight() {
    return html`<div class="right">
      <div class="tools">
        ${toolIcons.map((p, i) => html`<div class="tool ${i > 13 ? "alert" : ""}"><svg viewBox="0 0 32 32">${p}</svg></div>`)}
      </div>
      <div class="rightin">
        <div class="mini">
          <svg viewBox="0 0 154 78">
            <polyline points="5,5 52,5 52,10 56,12 56,28 49,28 49,44 56,44 56,48 49,48 49,66 52,68 52,76 7,76 7,64 5,36 5,5" fill="none" stroke="#fff" stroke-width="2"/>
            <rect x="7" y="12" width="4" height="3" fill="#d01818"/>
            <path d="M2 73l6 6M8 73l-6 6" stroke="#ddd"/>
          </svg>
        </div>
        <div class="coords">X = 1.004802"\nY = 9.961323"</div>
      </div>
    </div>`;
  }

  private renderXy() {
    return html`<div class="xy">
      <div class="xybtn"><svg viewBox="0 0 22 22"><rect x="1" y="1" width="20" height="20" fill="none" stroke="#000"/><path d="M4 4l14 14M4 4h5M4 4v5M18 18h-5M18 18v-5" fill="none" stroke="#000"/></svg></div>
      <div class="xybtn"><svg viewBox="0 0 22 22"><rect x="1" y="1" width="20" height="20" fill="none" stroke="#000"/><path d="M3 17h13M3 17L15 5M8 17q0-4-2-5" fill="none" stroke="#000"/><text x="13" y="18" font-size="6" font-family="Liberation Sans">ox</text></svg></div>
      <div class="xybtn teal"><svg viewBox="0 0 22 22"><rect x="3" y="3" width="16" height="16" fill="none" stroke="#000"/><path d="M3 11h16M11 3v16" stroke="#000"/></svg></div>
      <div class="xylabel">X Y :</div>
      <div class="xyinput">I</div>
      <div class="xybtn teal"><svg viewBox="0 0 22 22"><rect x="2" y="2" width="18" height="18" fill="none" stroke="#000" stroke-width="1.5"/><path d="M11 4v10" stroke="#000" stroke-width="2"/><path d="M11 16v2" stroke="#000" stroke-width="2"/></svg></div>
      <div class="xyrest"></div>
      <div class="inchwrap"><div class="inch">Inch<i></i></div></div>
    </div>`;
  }

  private renderMain() {
    const menus = ["File", "Edit", "Actions", "Options", "Analysis", "DFM", "Step", "Rout", "Windows"];
    return html`<div class="main">
      <div class="title">
        ${appIcon}Graphic Editor 9.07b2 (00@HY-HYCAM-PC171 - Windows, pid:48756)
        <div class="winbtns"><span class="winbtn">${minGlyph}</span><span class="winbtn">${maxGlyph}</span><span class="winbtn">${closeGlyph}</span></div>
      </div>
      <div class="menurow">
        <div class="menu">
          ${menus.map((m) => (m === "DFM" ? html`<span>${m}</span>` : html`<span><u>${m[0]}</u>${m.slice(1)}</span>`))}
          <span class="help">Help</span>
        </div>
        <div class="brand">
          <svg class="stripes" viewBox="0 0 22 22"><path d="M6 1h16l-4 3H4zM4 7h16l-2 3H2zM2 13h16l-2 3H1zM0 19h16l-2 3H0z" fill="#e81818"/></svg>
          <div class="frontline">Frontline<i></i></div>
          <div class="genesis">Genesis 2000<small>Graphic Editor</small></div>
          <div class="stamp"><div>23  Jun  2017</div><div>12:43  AM</div><div class="pause"><b></b><b></b></div></div>
        </div>
      </div>
      <div class="body">
        ${this.renderLeft()}
        <div class="canvas">
          ${pads.map(([x, y, r]) => html`<div class="pad" style="left:${x - r - 157}px;top:${y - r - 81}px;width:${r * 2}px;height:${r * 2}px"></div>`)}
        </div>
        ${this.renderRight()}
      </div>
      ${this.renderXy()}
      <div class="status"><div></div></div>
      <div class="mainfoot"></div>
    </div>`;
  }

  private renderDialog() {
    return html`<div class="dlg">
      <div class="dlgtitle">
        <svg viewBox="0 0 14 14"><rect x="1" y="1" width="12" height="12" fill="#cfe8fa"/><path d="M2 3h10M2 6h10M2 9h10M2 12h10" stroke="#2a80d0" stroke-width="1.5"/></svg>
        制作规范 (Ver:1.0.6)
        <div class="winbtns"><span class="winbtn">${minGlyph}</span><span class="winbtn">${maxGlyph}</span><span class="winbtn">${closeGlyph}</span></div>
      </div>
      <div class="dlgbar">
        <div class="filter">
          <span class="chk"></span><span class="lb">P1</span>
          <span class="chk">${this.tick}</span><span class="lb">P2</span>
          <span class="chk"></span><span class="lb">P3</span>
          <div class="combo">当前章节<i></i></div>
          <div class="search"></div>
          <svg class="glass" viewBox="0 0 24 28"><circle cx="10" cy="11" r="8" fill="#dff0fa" stroke="#9ab0c4" stroke-width="1.5"/><path d="M15 17l7 9" stroke="#b07020" stroke-width="3"/></svg>
        </div>
        <div class="camlogo"><em>CAM</em>中心<small>CAM 中心</small></div>
      </div>
      <div class="tabs">
        ${tabRows.map((row) => html`<div class="tabrow">${row.map((t) => html`<div class="tab ${t === "钻孔" ? "on" : ""}"><span class="t">${mix(t)}</span></div>`)}</div>`)}
      </div>
      <div class="content">
        <div class="tree">
          ${tree.map(
            (n) => html`<div class="node ${n.sub ? "sub" : ""} ${n.sel ? "sel" : ""}">
              ${n.sub ? "" : html`<span class="box ${n.open ? "" : "plus"}"></span>`}
              <span class="nodeText"><span class="lat num">${n.num}</span>${mix(n.text)}</span>
            </div>`,
          )}
        </div>
        <div class="table">
          <div class="thead">
            <div class="corner"></div><div>内容</div><div>备注</div><div>附件</div>
            ${["P1", "P2", "P3"].map((p) => html`<div><span class="lat">${p}</span></div>`)}
          </div>
          ${specRows.map(
            (r) => html`<div class="trow" style="height:${r.h}px">
              <div class="rh"></div>
              <div class="lines">${r.body.map((l) => html`<div>${mix(l)}</div>`)}</div>
              <div class="lines ${r.clip ? "top" : ""}">${(r.note ?? []).map((l) => html`<div>${mix(l)}</div>`)}</div>
              <div>${r.file ? html`<span class="link">${mix(r.file)}</span>` : ""}</div>
              ${[0, 1, 2].map(() => html`<div class="ck"><span class="ckbox">${this.tick}</span></div>`)}
            </div>`,
          )}
        </div>
        <div class="vscroll"><div class="up"></div><div class="th"><div class="grip"></div></div></div>
      </div>
    </div>`;
  }

  private renderPopup() {
    return html`<div class="popup">
      <div class="poptitle">${appIcon}Measure Popup<span class="winbtn">${closeGlyph}</span></div>
      <div class="pophead">Measure Mode</div>
      ${measureModes.map((m, i) => html`<div class="popitem"><span class="dia ${i === 1 ? "on" : ""}"></span>${m}</div>`)}
      <div class="popfill"></div>
      <div class="popclose">Close</div>
    </div>`;
  }

  private renderTaskbar() {
    return html`<div class="taskbar">
      <div class="startcol">
        <div class="tb start"><svg class="ico" viewBox="0 0 16 16"><path d="M1 3l6-1v6H1z" fill="#e8602a"/><path d="M8 2l7-1v7H8z" fill="#7ab62e"/><path d="M1 9h6v6l-6-1z" fill="#3a8ae0"/><path d="M8 9h7v6l-7 1z" fill="#f4c220"/></svg><span>开始</span></div>
        <div class="logos"><svg viewBox="0 0 20 20"><circle cx="6" cy="6" r="4" fill="#e8c030"/><circle cx="14" cy="6" r="4" fill="#4aa8d8"/><circle cx="6" cy="14" r="4" fill="#e05050"/><circle cx="14" cy="14" r="4" fill="#d04040"/><circle cx="10" cy="10" r="3" fill="#60b040"/></svg></div>
      </div>
      <div class="tdiv"></div>
      <div class="tmain">
        <div class="trow1">
          <div class="quick">
            <svg viewBox="0 0 18 18"><path d="M5 2h10L9 8l5 2-6 6H2l6-6-5-2z" fill="#3aa8c8"/><path d="M5 2h10L9 8H4z" fill="#60b850"/></svg>
            <svg viewBox="0 0 18 18"><rect width="18" height="18" fill="#c01818"/><path d="M3 14q4-2 6-10 1 7 6 8-6-1-12 2z" fill="none" stroke="#fff"/></svg>
          </div>
          ${taskRow1.map(
            (b, i) => html`${i === 1 ? html`<svg class="ie" viewBox="0 0 18 18"><circle cx="9" cy="9" r="7" fill="#58c040"/><circle cx="9" cy="9" r="4" fill="#fff"/><path d="M5 9h8" stroke="#58c040" stroke-width="2"/></svg>` : ""}
              <div class="tb ${b.on ? "on" : ""}" style="width:${b.w}px;margin-left:${b.m}px">${b.i}<span>${b.t}</span></div>`,
          )}
        </div>
        <div class="trow2">
          ${taskRow2.map((b) => html`<div class="tb" style="margin-left:${b.m}px">${b.i}<span>${b.t}</span></div>`)}
        </div>
      </div>
      <div class="tray-wrap">
        <div class="tdiv"></div>
        <div class="sysbar">
          <svg viewBox="0 0 18 14"><rect x="1" y="5" width="16" height="8" rx="1" fill="none" stroke="#999"/><path d="M3 8h12M3 10.5h12M11 5V1H14" fill="none" stroke="#999"/></svg>
          <svg viewBox="0 0 18 14"><path d="M6 4V1h6v4h-2M4 5h5v4H4z" fill="none" stroke="#000"/><path d="M6 11h6l-3 3z"/></svg>
        </div>
        <div class="tray">
          <svg viewBox="0 0 17 17"><path d="M4 8l4-3 4 3M4 12l4-3 4 3" fill="none" stroke="#000" stroke-width="1.5"/></svg>
          <svg viewBox="0 0 17 17"><circle cx="8.5" cy="8.5" r="8" fill="#e8d820"/><circle cx="8.5" cy="8.5" r="5" fill="#50a030"/><path d="M8.5 5v7M5 8.5h7" stroke="#000" stroke-width="1.5"/></svg>
          <svg viewBox="0 0 17 17"><path d="M2 2h8v13H2zM10 6h5v2h-2v4h-3" fill="none" stroke="#666" stroke-width="1.5"/></svg>
          <svg viewBox="0 0 17 17"><path d="M2 15v-2M6 15v-5M10 15V7M14 15V3" stroke="#888" stroke-width="2.5"/></svg>
          <div class="clock"><div>1:10</div><div class="day">星期五</div><div>2017/6/23</div></div>
          <span></span>
          <span></span>
          <svg viewBox="0 0 17 17"><path d="M14 4q-2-3-6-2-6 2-5 8t7 5 4-5H8" fill="none" stroke="#d83018" stroke-width="3"/></svg>
          <svg viewBox="0 0 17 17"><path d="M1 6h3l4-4v13l-4-4H1z" fill="#ccc" stroke="#888"/><path d="M11 5q2 3.5 0 7M13 3q4 5.5 0 11" fill="none" stroke="#888"/></svg>
          <svg viewBox="0 0 17 17"><path d="M4 4h12l-2 3H5zM2 9h11l-2 3H5l-2 3H0z" fill="#1c80e0"/></svg>
          <svg viewBox="0 0 17 17"><rect y="2" width="17" height="11" fill="#3a78b8"/><path d="M0 11h17v3H0z" fill="#204468"/></svg>
          <span></span>
          <svg viewBox="0 0 17 17"><path d="M1 15L13 3l-3 12z" fill="#e81010"/><path d="M10 15l3-5 3 5z" fill="#30c050"/></svg>
        </div>
      </div>
    </div>`;
  }

  render() {
    return html`
      ${this.renderMain()}
      ${this.renderDialog()}
      ${this.renderPopup()}
      <div class="badge">65</div>
      ${this.renderTaskbar()}
      <div class="box-note">近孔请按照规范将其中一<br />个改为线属性</div>
      <svg class="marks" viewBox="0 0 1600 900">
        <defs><filter id="sh"><feDropShadow dx="2" dy="2" stdDeviation="1.5" flood-color="#000" flood-opacity=".35"/></filter></defs>
        <path d="M1118 668L996 758" stroke="#00f000" stroke-width="6" fill="none"/>
        <path d="M978 772l8-26 23 19z" fill="#00f000"/>
        <rect x="501" y="765" width="668" height="75" fill="none" stroke="#d81c1c" stroke-width="2" filter="url(#sh)"/>
      </svg>
    `;
  }
}
